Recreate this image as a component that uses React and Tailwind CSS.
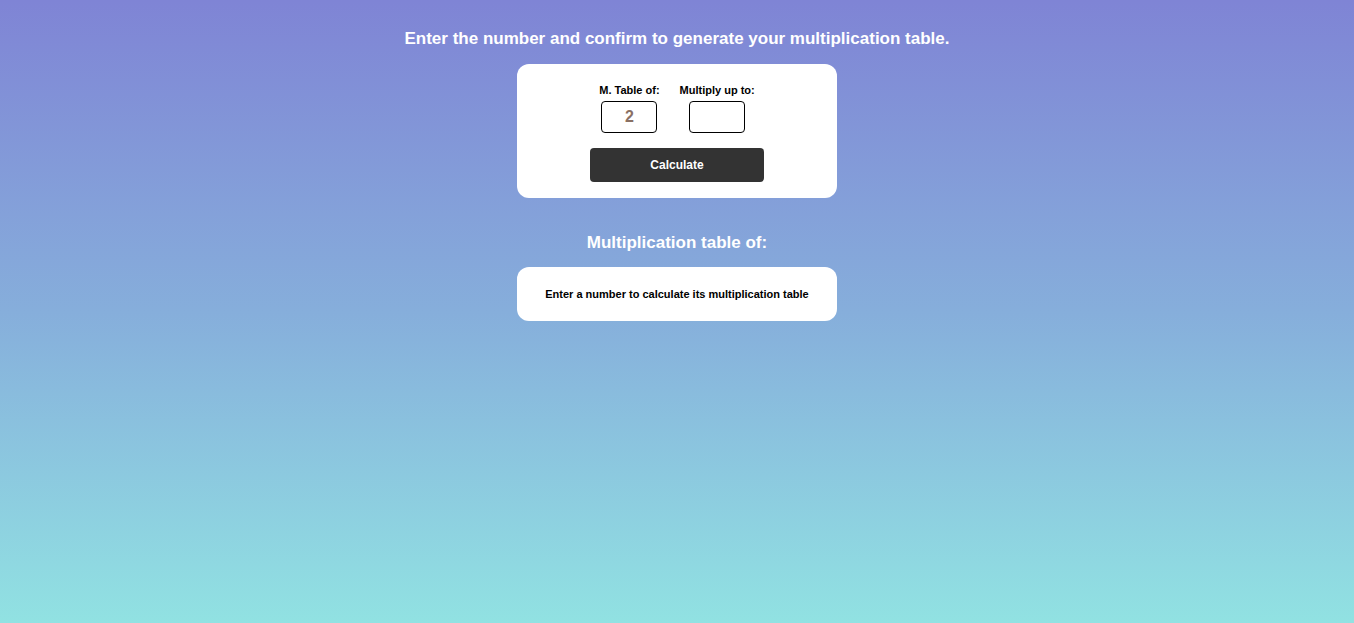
import React, { useState } from 'react';

const App = () => {
    const [num, setNum] = useState('2');
    const [upTo, setUpTo] = useState('');

    return (
        <div className="min-h-screen w-full bg-gradient-to-b from-[#7f84d5] via-[#86aedb] to-[#91e2e2] flex flex-col items-center font-['Liberation_Sans',Arial,sans-serif]">
            <h1 className="mt-[29px] text-[17px] leading-[20px] font-bold text-white">
                Enter the number and confirm to generate your multiplication table.
            </h1>
            <div className="mt-[15px] w-[320px] h-[134px] bg-white rounded-[12px] flex flex-col items-center pt-[20px]">
                <div className="flex gap-[20px]">
                    <div className="flex flex-col items-center">
                        <label className="text-[11px] leading-[13px] font-bold text-black">M. Table of:</label>
                        <input
                            type="text"
                            value={num}
                            onChange={(e) => setNum(e.target.value)}
                            className="mt-[4px] w-[56px] h-[32px] border border-black rounded-[4px] text-center text-[16px] font-bold text-[#8a7064] outline-none"
                        />
                    </div>
                    <div className="flex flex-col items-center">
                        <label className="text-[11px] leading-[13px] font-bold text-black">Multiply up to:</label>
                        <input
                            type="text"
                            value={upTo}
                            onChange={(e) => setUpTo(e.target.value)}
                            className="mt-[4px] w-[56px] h-[32px] border border-black rounded-[4px] text-center text-[16px] font-bold text-[#8a7064] outline-none"
                        />
                    </div>
                </div>
                <button className="mt-[15px] w-[174px] h-[34px] bg-[#333333] rounded-[4px] text-white text-[12px] font-bold">
                    Calculate
                </button>
            </div>
            <h2 className="mt-[35px] text-[17px] leading-[20px] font-bold text-white">Multiplication table of:</h2>
            <div className="mt-[14px] w-[320px] h-[54px] bg-white rounded-[12px] flex items-center justify-center">
                <p className="text-[11px] font-bold text-black">Enter a number to calculate its multiplication table</p>
            </div>
        </div>
    );
};

export default App;
